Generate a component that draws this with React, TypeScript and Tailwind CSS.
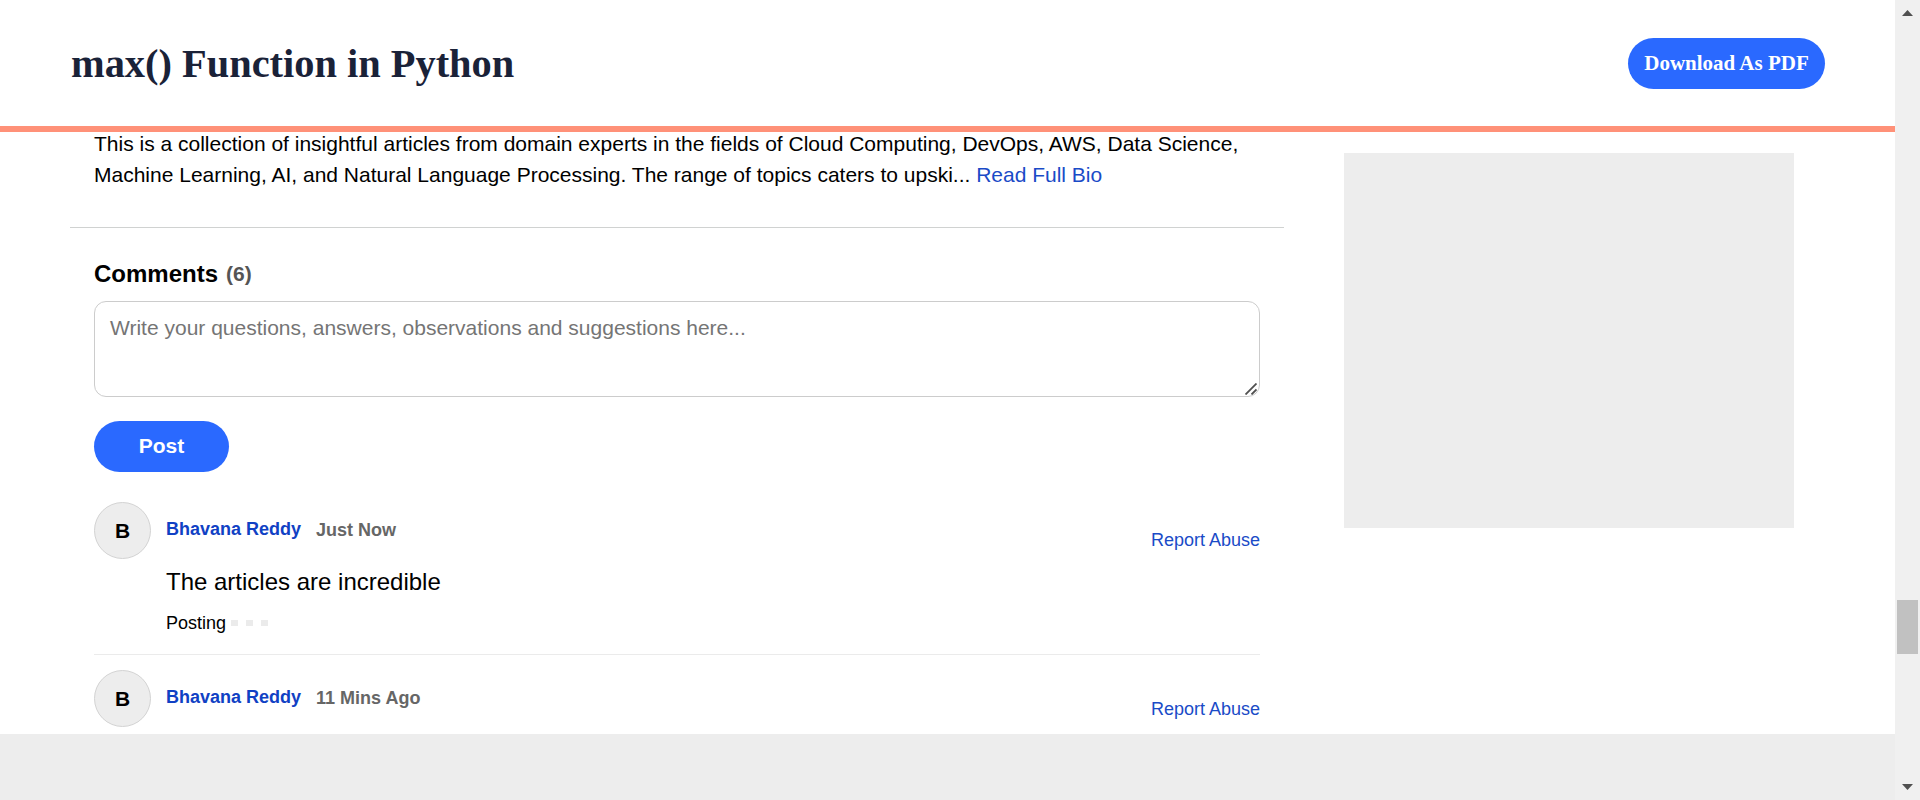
type CommentProps = { name: string; time: string; offset: string; children?: React.ReactNode };

function Comment({ name, time, offset, children }: CommentProps) {
  return (
    <article className="flex h-[168px] shrink-0 border-b border-[#ebebeb]">
      <div className="mt-[15px] flex size-[57px] shrink-0 items-center justify-center rounded-full border border-[#d3d3d3] bg-[#ededed] text-[21px] font-bold">
        B
      </div>
      <div className="ml-[15px] mt-8 flex-1">
        <div className="flex h-[27px] items-start gap-[15px] text-[18px] leading-5 font-bold">
          <span className="text-[#1041c4]">{name}</span>
          <span className="pt-px text-[#666]">{time}</span>
        </div>
        {children}
      </div>
      <a className={`${offset} text-[18px] leading-5 text-[#1a4bc7]`}>Report Abuse</a>
    </article>
  );
}

export default function App() {
  return (
    <div className="flex h-[800px] w-[1920px] overflow-hidden bg-white font-['Liberation_Sans',Arial,sans-serif] text-black">
      <div className="flex w-[1895px] flex-col">
        <header className="flex h-[132px] shrink-0 items-center justify-between border-b-6 border-[#ff9178] pr-[70px] pl-[71px] font-['Liberation_Serif',serif] font-bold">
          <h1 className="pt-px text-[40.4px] leading-[50px] text-[#1a2238]">max() Function in Python</h1>
          <button className="h-[51px] w-[197px] rounded-full bg-[#2a69ff] pt-0.5 text-[21px] whitespace-nowrap text-white">
            Download As PDF
          </button>
        </header>
        <div className="flex h-[602px] shrink-0 overflow-hidden">
          <main className="ml-[70px] w-[1214px]">
            <section className="flow-root h-[96px] border-b border-[#d0d2d1] px-6">
              <p className="-mt-1 text-[21px] leading-[31px] whitespace-nowrap">
                This is a collection of insightful articles from domain experts in the fields of Cloud Computing, DevOps, AWS, Data Science,
                <br />
                Machine Learning, AI, and Natural Language Processing. The range of topics caters to upski...{" "}
                <a className="text-[#1a4bc7]">Read Full Bio</a>
              </p>
            </section>
            <section className="flex flex-col px-6">
              <h2 className="mt-8 flex h-[41px] text-[24px] leading-7 font-bold">
                Comments <span className="ml-2 text-[21px] text-[#555]">(6)</span>
              </h2>
              <div className="relative h-24 rounded-xl border border-[#ccc] px-[15px] pt-[14px] text-[21px] leading-6 text-[#757575]">
                Write your questions, answers, observations and suggestions here...
                <svg className="absolute right-[2px] bottom-[1px] size-3" viewBox="0 0 12 12" stroke="#505050" strokeWidth="1.8">
                  <path d="M.5 11.5 11.5.5M6.5 11.5l5-5" />
                </svg>
              </div>
              <button className="mt-6 h-[51px] w-[135px] rounded-full bg-[#2a69ff] pb-0.5 text-[21px] font-bold text-white">
                Post
              </button>
              <div className="mt-[15px] flex flex-col">
                <Comment name="Bhavana Reddy" time="Just Now" offset="mt-[43px]">
                  <p className="mt-[22px] text-[24px] leading-7">The articles are incredible</p>
                  <div className="mt-[17px] flex items-center text-[18px] leading-5">
                    Posting
                    <span className="ml-[5px] flex gap-2">
                      <i className="h-[6px] w-[7px] bg-[#ebebeb]" />
                      <i className="h-[6px] w-[7px] bg-[#ebebeb]" />
                      <i className="h-[6px] w-[7px] bg-[#ebebeb]" />
                    </span>
                  </div>
                </Comment>
                <Comment name="Bhavana Reddy" time="11 Mins Ago" offset="mt-[44px]" />
              </div>
            </section>
          </main>
          <aside className="mt-[21px] ml-[60px] h-[375px] w-[450px] bg-[#ededed]" />
        </div>
        <div className="flex-1 bg-[#ededed]" />
      </div>
      <div className="flex w-[25px] flex-col items-center bg-[#f0f0f0]">
        <svg className="mt-[10px] h-[6px] w-[11px]" viewBox="0 0 11 6" fill="#505050">
          <path d="M5.5 0 11 6H0z" />
        </svg>
        <div className="mt-[584px] h-[54px] w-[21px] bg-[#c1c1c1]" />
        <svg className="mt-[130px] h-[6px] w-[11px]" viewBox="0 0 11 6" fill="#505050">
          <path d="M0 0h11L5.5 6z" />
        </svg>
      </div>
    </div>
  );
}
